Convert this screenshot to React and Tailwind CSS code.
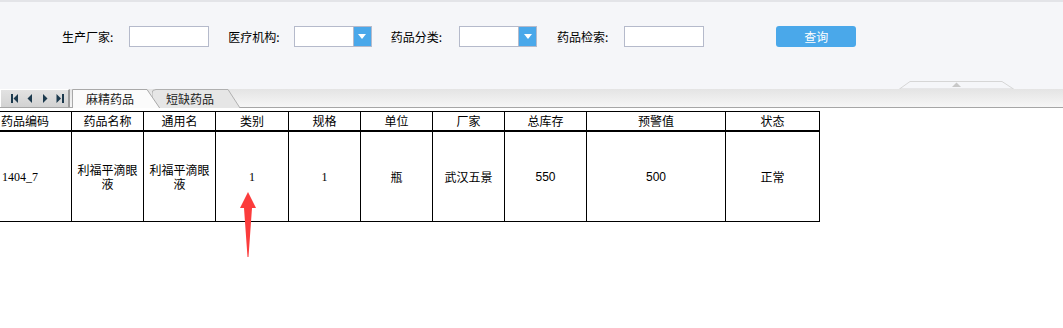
import React from 'react'

const COLS = [
  { label: '药品编码', w: 'w-[72px]', align: 'justify-start pl-[1px]' },
  { label: '药品名称', w: 'w-[72px]' },
  { label: '通用名', w: 'w-[72px]' },
  { label: '类别', w: 'w-[73px]' },
  { label: '规格', w: 'w-[72px]' },
  { label: '单位', w: 'w-[72px]' },
  { label: '厂家', w: 'w-[72px]' },
  { label: '总库存', w: 'w-[82px]' },
  { label: '预警值', w: 'w-[139px]' },
  { label: '状态', w: 'w-[94px]' },
]

const ROW = [
  { v: '1404_7', cls: "font-['Liberation_Serif'] justify-start pl-[2px]" },
  { v: '利福平滴眼液' },
  { v: '利福平滴眼液' },
  { v: '1', cls: "font-['Liberation_Serif'] text-[11px]" },
  { v: '1', cls: "font-['Liberation_Serif'] text-[11px]" },
  { v: '瓶' },
  { v: '武汉五景' },
  { v: '550', cls: "font-['Liberation_Sans'] text-[10.5px]" },
  { v: '500', cls: "font-['Liberation_Sans'] text-[10.5px]" },
  { v: '正常' },
]

function Label({ children, className = '' }) {
  return <span className={`text-[12px] leading-[21px] text-black ${className}`}>{children}</span>
}

function TextBox({ className = '' }) {
  return <div className={`h-[21px] w-[80px] bg-white border border-[#b5bacb] ${className}`} />
}

function SelectBox({ className = '' }) {
  return (
    <div className={`h-[21px] w-[78px] flex bg-white border border-[#b5bacb] ${className}`}>
      <div className="flex-1" />
      <div className="w-[18px] h-full bg-[#4aa8ea] border-l border-[#b5bacb] flex items-center justify-center">
        <svg width="8" height="5" viewBox="0 0 8 5">
          <polygon points="0,0 8,0 4,5" fill="#fff" />
        </svg>
      </div>
    </div>
  )
}

function NavIcon({ type }) {
  const c = '#1c3a4e'
  return (
    <svg width="8" height="9" viewBox="0 0 8 9">
      {type === 'first' && (
        <>
          <rect x="0" y="0" width="2" height="9" fill={c} />
          <polygon points="7,0 7,9 2.5,4.5" fill={c} />
        </>
      )}
      {type === 'prev' && <polygon points="6,0 6,9 1.5,4.5" fill={c} />}
      {type === 'next' && <polygon points="2,0 2,9 6.5,4.5" fill={c} />}
      {type === 'last' && (
        <>
          <polygon points="0.5,0 0.5,9 5,4.5" fill={c} />
          <rect x="6" y="0" width="2" height="9" fill={c} />
        </>
      )}
    </svg>
  )
}

export default function App() {
  return (
    <div className="relative w-[1063px] h-[328px] bg-white overflow-hidden font-['Noto_Sans_CJK_SC',sans-serif]">
      {/* query panel */}
      <div className="relative h-[89px] bg-[#f5f6f9] border-t-2 border-[#e3e4e8]">
        <div className="flex items-start pt-[24px] pl-[62px]">
          <Label>生产厂家:</Label>
          <TextBox className="ml-[16px]" />
          <Label className="ml-[19px]">医疗机构:</Label>
          <SelectBox className="ml-[14px]" />
          <Label className="ml-[19px]">药品分类:</Label>
          <SelectBox className="ml-[17px]" />
          <Label className="ml-[20px]">药品检索:</Label>
          <TextBox className="ml-[16px]" />
          <button className="ml-[72px] h-[21px] w-[80px] rounded-[3px] bg-[#4aa8ea] text-white text-[12px] leading-[21px]">
            查询
          </button>
        </div>
        <svg className="absolute left-[899px] bottom-0" width="115" height="8" viewBox="0 0 115 8">
          <polygon points="0.5,8 11,0.5 103,0.5 114.5,8" fill="#f5f6f9" stroke="#d6d6d6" strokeWidth="1" />
          <polygon points="53,6 57.5,1.5 62,6" fill="#c8c8c8" />
        </svg>
      </div>

      {/* tab strip */}
      <div className="flex h-[19px] bg-gradient-to-b from-[#e4e4e4] to-[#f6f6f6] border-b border-[#a6a6a6]">
        <div className="w-[70px] h-full flex items-center gap-[7px] pl-[10px] bg-gradient-to-b from-[#e2e2e2] to-[#d2d2d2] border-t border-l border-white border-r-2 border-r-[#9c9c9c]">
          <NavIcon type="first" />
          <NavIcon type="prev" />
          <NavIcon type="next" />
          <NavIcon type="last" />
        </div>
        <div className="relative h-full w-[172px] ml-[2px]">
          <div className="absolute left-[80px] top-0 w-[90px] h-[19px]">
            <svg className="absolute inset-0" width="90" height="19" viewBox="0 0 90 19">
              <path d="M0,19 L0,4 Q0,0.5 4,0.5 L76,0.5 L88,19" fill="#e6e6e6" stroke="#b0b0b0" strokeWidth="1" />
            </svg>
            <span className="relative block pl-[14px] text-[12px] leading-[19px] text-[#222]">短缺药品</span>
          </div>
          <div className="absolute left-0 top-0 w-[90px] h-[19px]">
            <svg className="absolute inset-0" width="90" height="19" viewBox="0 0 90 19">
              <path d="M0.5,19.5 L0.5,0.5 L75,0.5 L88,19.5" fill="#fbfbfb" stroke="#a9a9a9" strokeWidth="1" />
            </svg>
            <span className="relative block pl-[14px] text-[12px] leading-[19px] text-[#222]">麻精药品</span>
          </div>
        </div>
      </div>

      {/* grid */}
      <div className="relative mt-[3px] w-[820px] border-t border-b border-black text-black">
        <div className="flex h-[20px] border-b-2 border-black">
          {COLS.map((c, i) => (
            <div
              key={i}
              className={`${c.w} shrink-0 h-full border-r border-black flex items-center ${c.align || 'justify-center'} text-[12px]`}
            >
              {c.label}
            </div>
          ))}
        </div>
        <div className="flex h-[89px]">
          {ROW.map((r, i) => (
            <div
              key={i}
              className={`${COLS[i].w} shrink-0 h-full border-r border-black flex items-center ${r.cls && r.cls.includes('justify-start') ? '' : 'justify-center'} text-center text-[12px] leading-[14px] px-[4px] ${r.cls || ''}`}
            >
              {r.v}
            </div>
          ))}
        </div>
      </div>

      {/* annotation arrow */}
      <svg className="absolute left-[239px] top-[192px]" width="18" height="66" viewBox="0 0 18 66">
        <polygon points="9,0 17,16 13,16 9.5,65 8.5,65 5,16 1,16" fill="#fb3c3c" />
      </svg>
    </div>
  )
}
